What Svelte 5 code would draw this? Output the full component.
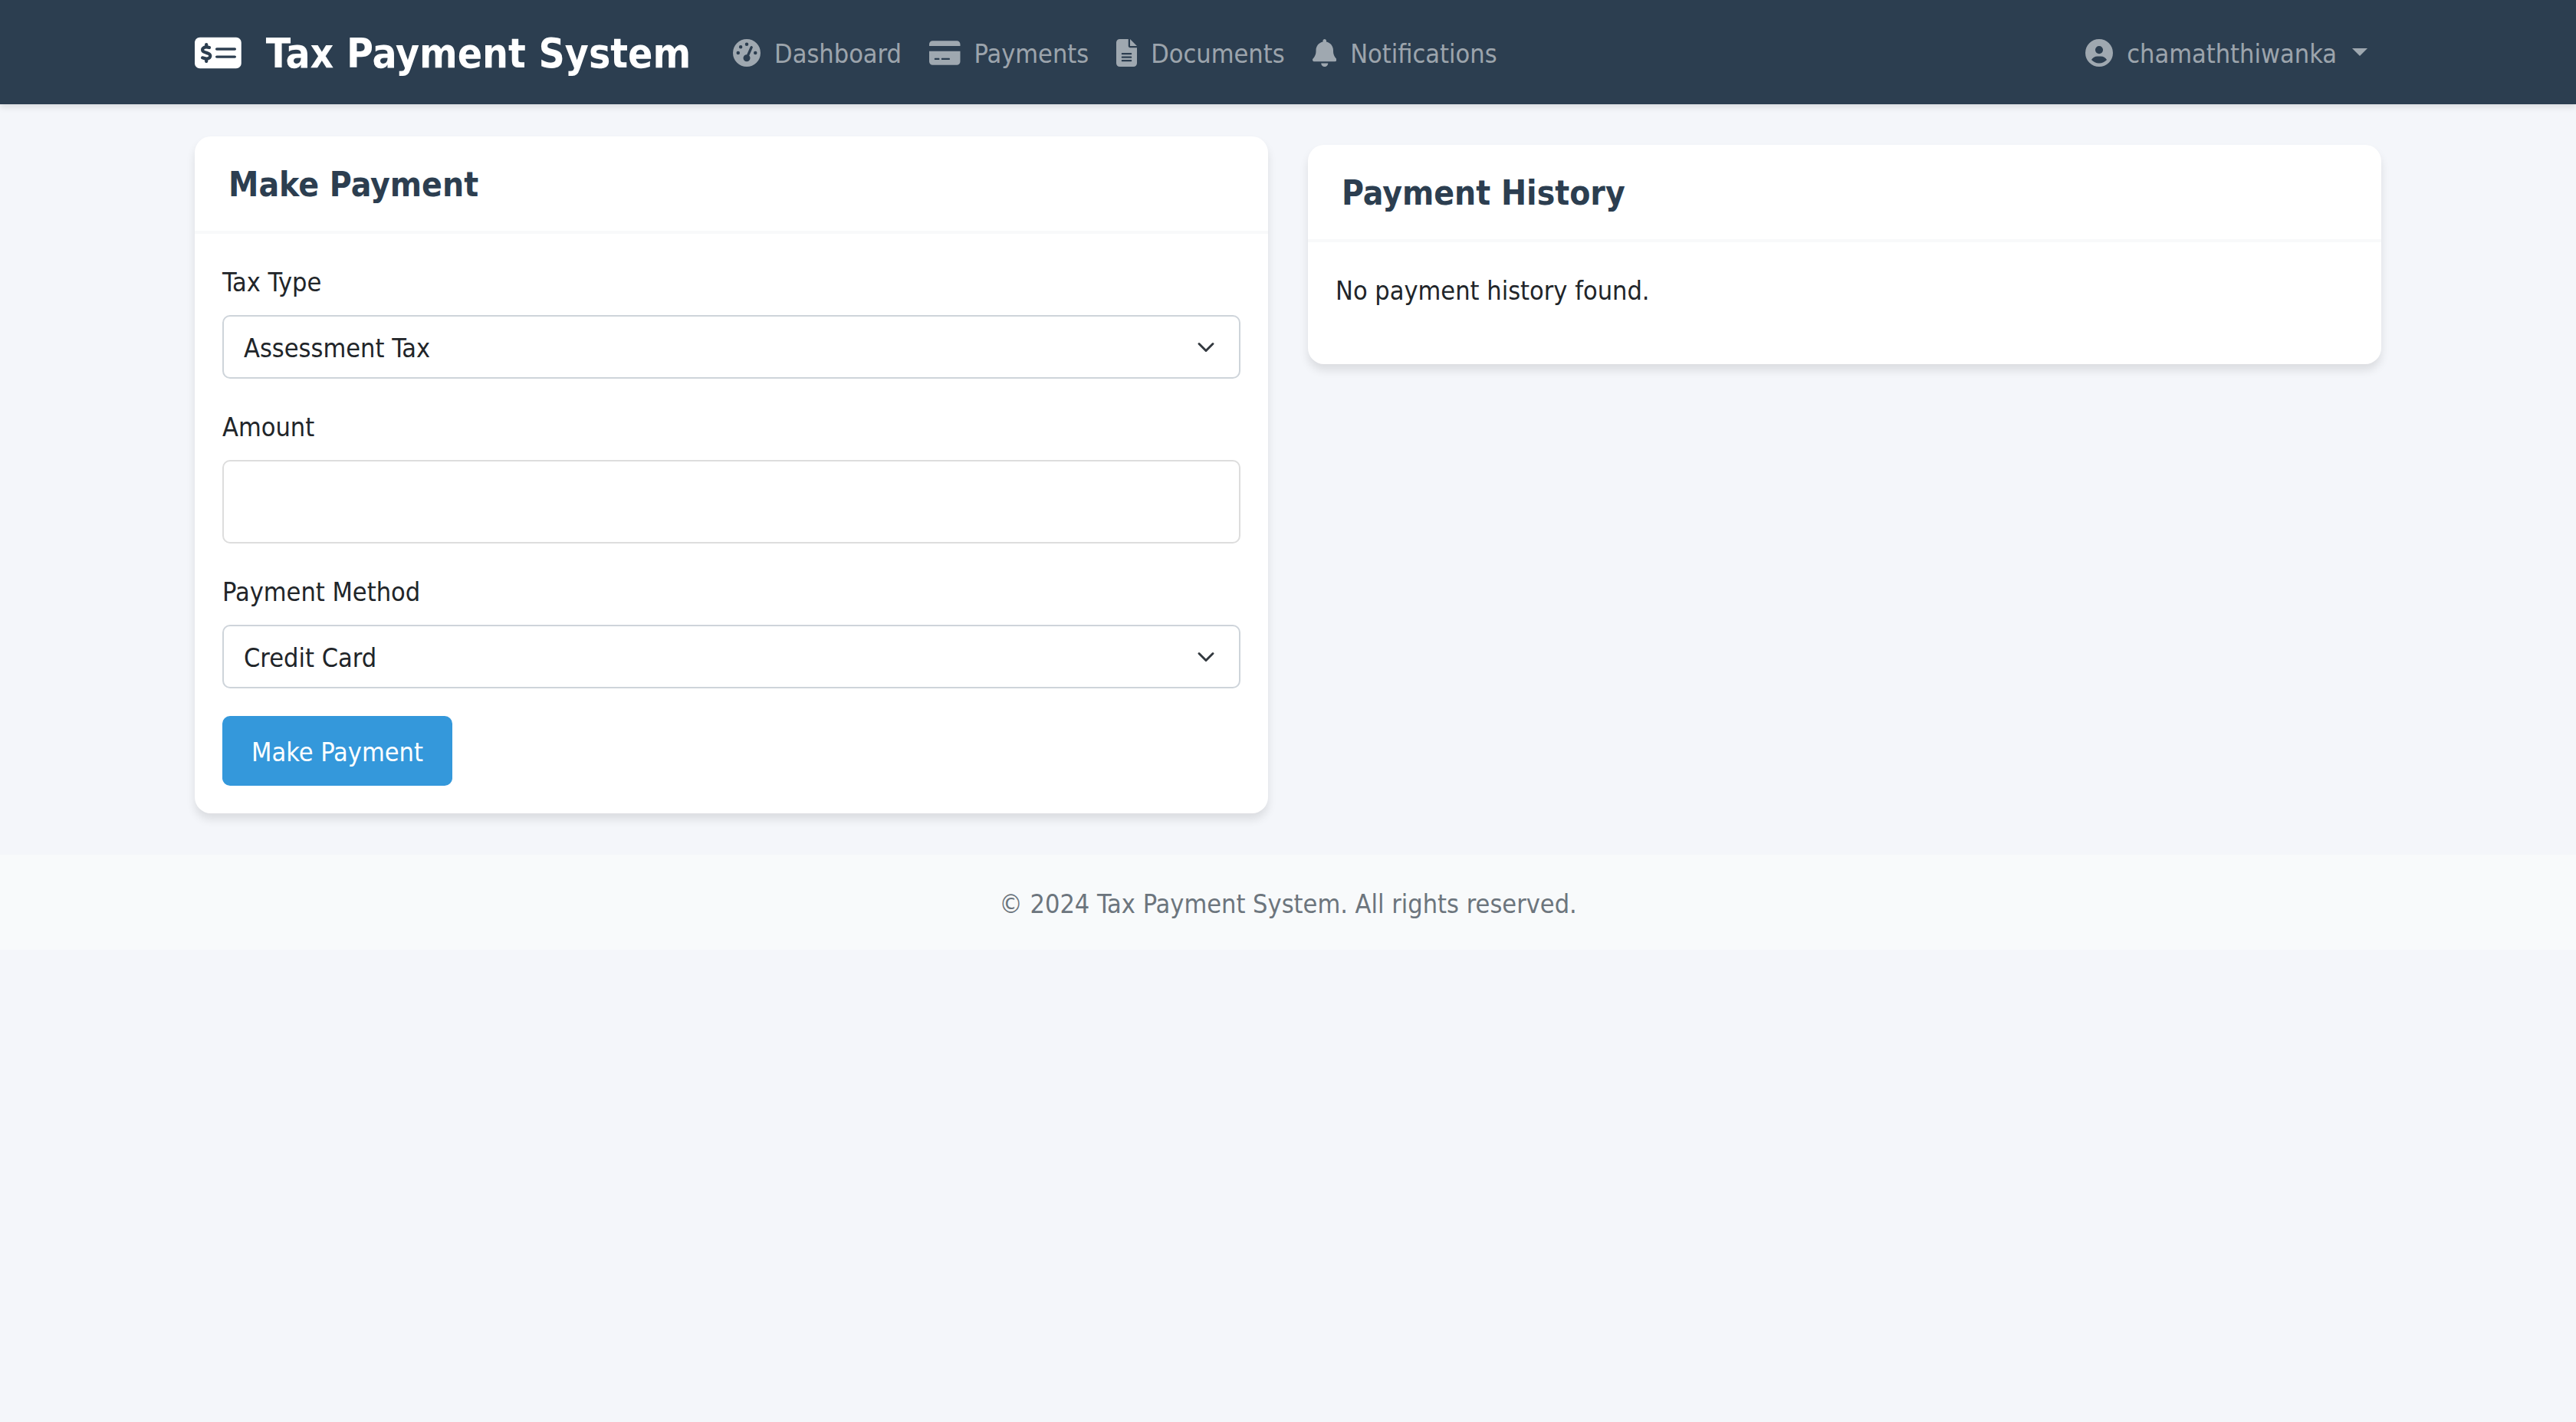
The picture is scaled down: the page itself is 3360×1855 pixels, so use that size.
<script>
  const navItems = [
    {
      label: 'Dashboard',
      href: '#dashboard',
      width: 512,
      path: 'M0 256a256 256 0 1 1 512 0A256 256 0 1 1 0 256zM288 96a32 32 0 1 0 -64 0 32 32 0 1 0 64 0zM256 416c35.3 0 64-28.7 64-64c0-17.4-6.9-33.1-18.1-44.6L366 161.7c5.3-12.1-.2-26.3-12.3-31.6s-26.3 .2-31.6 12.3L257.9 288c-.6 0-1.3 0-1.9 0c-35.3 0-64 28.7-64 64s28.7 64 64 64zM176 144a32 32 0 1 0 -64 0 32 32 0 1 0 64 0zM96 288a32 32 0 1 0 0-64 32 32 0 1 0 0 64zm352-32a32 32 0 1 0 -64 0 32 32 0 1 0 64 0z'
    },
    {
      label: 'Payments',
      href: '#payments',
      width: 576,
      path: 'M64 32C28.7 32 0 60.7 0 96v32H576V96c0-35.3-28.7-64-64-64H64zM576 224H0V416c0 35.3 28.7 64 64 64H512c35.3 0 64-28.7 64-64V224zM112 352h64c8.8 0 16 7.2 16 16s-7.2 16-16 16H112c-8.8 0-16-7.2-16-16s7.2-16 16-16zm112 16c0-8.8 7.2-16 16-16H368c8.8 0 16 7.2 16 16s-7.2 16-16 16H240c-8.8 0-16-7.2-16-16z'
    },
    {
      label: 'Documents',
      href: '#documents',
      width: 384,
      path: 'M64 0C28.7 0 0 28.7 0 64V448c0 35.3 28.7 64 64 64H320c35.3 0 64-28.7 64-64V160H256c-17.7 0-32-14.3-32-32V0H64zM256 0V128H384L256 0zM112 256H272c8.8 0 16 7.2 16 16s-7.2 16-16 16H112c-8.8 0-16-7.2-16-16s7.2-16 16-16zm0 64H272c8.8 0 16 7.2 16 16s-7.2 16-16 16H112c-8.8 0-16-7.2-16-16s7.2-16 16-16zm0 64H272c8.8 0 16 7.2 16 16s-7.2 16-16 16H112c-8.8 0-16-7.2-16-16s7.2-16 16-16z'
    },
    {
      label: 'Notifications',
      href: '#notifications',
      width: 448,
      path: 'M224 0c-17.7 0-32 14.3-32 32V51.2C119 66 64 130.6 64 208v18.8c0 47-17.3 92.4-48.5 127.6l-7.4 8.3c-8.4 9.4-10.4 22.9-5.3 34.4S19.4 416 32 416H416c12.6 0 24-7.4 29.2-18.9s3.1-25-5.3-34.4l-7.4-8.3C401.3 319.2 384 273.9 384 226.8V208c0-77.4-55-142-128-156.8V32c0-17.7-14.3-32-32-32zm45.3 493.3c12-12 18.7-28.3 18.7-45.3H224 160c0 17 6.7 33.3 18.7 45.3s28.3 18.7 45.3 18.7s33.3-6.7 45.3-18.7z'
    }
  ];

  let taxType = $state('Assessment Tax');
  let amount = $state('');
  let method = $state('Credit Card');
</script>

{#snippet chevron()}
  <svg class="chevron" viewBox="0 0 16 16" aria-hidden="true">
    <path d="m2 5 6 6 6-6" fill="none" stroke="#343a40" stroke-width="2" stroke-linecap="round" stroke-linejoin="round" />
  </svg>
{/snippet}

<header class="navbar">
  <div class="container bar">
    <a class="brand" href="#home">
      <svg class="brand-icon" viewBox="0 0 576 512" aria-hidden="true">
        <path d="M64 64C28.7 64 0 92.7 0 128V384c0 35.3 28.7 64 64 64H512c35.3 0 64-28.7 64-64V128c0-35.3-28.7-64-64-64H64zM272 192H496c8.8 0 16 7.2 16 16s-7.2 16-16 16H272c-8.8 0-16-7.2-16-16s7.2-16 16-16zM256 304c0-8.8 7.2-16 16-16H496c8.8 0 16 7.2 16 16s-7.2 16-16 16H272c-8.8 0-16-7.2-16-16zM164 152v13.9c7.5 1.2 14.6 2.9 21.1 4.7c10.7 2.8 17 13.8 14.2 24.5s-13.8 17-24.5 14.2c-11-2.9-21.6-5-31.2-5.2c-7.9-.1-16 1.8-21.5 5c-4.8 2.8-6.2 5.6-6.2 9.3c0 1.8 .1 3.5 5.3 6.7c6.3 3.8 15.5 6.7 28.3 10.5l.7 .2c11.2 3.4 25.6 7.7 37.1 15c12.9 8.1 24.3 21.3 24.6 41.6c.3 20.9-10.5 36.1-24.8 45c-7.2 4.5-15.2 7.3-23.2 9V360c0 11-9 20-20 20s-20-9-20-20V345.4c-10.3-2.2-20-5.5-28.2-8.4l0 0 0 0c-2.1-.7-4.1-1.4-6.1-2.1c-10.5-3.5-16.1-14.8-12.6-25.3s14.8-16.1 25.3-12.6c2.5 .8 4.9 1.7 7.2 2.4c13.6 4.6 24 8.1 35.1 8.5c8.6 .3 16.5-1.6 21.4-4.7c4.1-2.5 6-5.5 5.9-10.5c0-2.9-.8-5-5.9-8.2c-6.3-4-15.4-6.9-28-10.7l-1.7-.5c-10.9-3.3-24.6-7.4-35.6-14c-12.7-7.7-24.6-20.5-24.7-40.7c-.1-21.1 11.8-35.7 25.8-43.9c6.9-4.1 14.5-6.8 22.2-8.5V152c0-11 9-20 20-20s20 9 20 20z" />
      </svg>
      <span>Tax Payment System</span>
    </a>
    <nav class="links" aria-label="Main">
      {#each navItems as item}
        <a class="nav-link" href={item.href}>
          <svg class="icon" viewBox="0 0 {item.width} 512" aria-hidden="true"><path d={item.path} /></svg>
          <span>{item.label}</span>
        </a>
      {/each}
    </nav>
    <button class="nav-link user" type="button" aria-haspopup="true">
      <svg class="icon" viewBox="0 0 512 512" aria-hidden="true">
        <path d="M399 384.2C376.9 345.8 335.4 320 288 320H224c-47.4 0-88.9 25.8-111 64.2c35.2 39.2 86.2 63.8 143 63.8s107.8-24.7 143-63.8zM0 256a256 256 0 1 1 512 0A256 256 0 1 1 0 256zm256 16a72 72 0 1 0 0-144 72 72 0 1 0 0 144z" fill-rule="evenodd" />
      </svg>
      <span>chamaththiwanka</span>
      <i class="caret"></i>
    </button>
  </div>
</header>

<main class="container content">
  <section class="card">
    <h2>Make Payment</h2>
    <form class="body" onsubmit={(e) => e.preventDefault()}>
      <div class="field">
        <label for="tax-type">Tax Type</label>
        <div class="select">
          <select id="tax-type" bind:value={taxType}>
            <option>Assessment Tax</option>
          </select>
          {@render chevron()}
        </div>
      </div>
      <div class="field">
        <label for="amount">Amount</label>
        <input id="amount" type="text" inputmode="decimal" bind:value={amount} />
      </div>
      <div class="field">
        <label for="method">Payment Method</label>
        <div class="select">
          <select id="method" bind:value={method}>
            <option>Credit Card</option>
          </select>
          {@render chevron()}
        </div>
      </div>
      <button class="submit" type="submit">Make Payment</button>
    </form>
  </section>

  <section class="card history">
    <h2>Payment History</h2>
    <div class="body">
      <p>No payment history found.</p>
    </div>
  </section>
</main>

<footer>© 2024 Tax Payment System. All rights reserved.</footer>

<style>
  :global(body) {
    background: #f4f6fa;
    color: #212529;
    font: 34px/54px 'DejaVu Sans Condensed', 'DejaVu Sans', sans-serif;
  }

  * {
    box-sizing: border-box;
  }

  .container {
    width: 100%;
    max-width: 2900px;
    margin: 0 auto;
    padding-inline: 24px;
  }

  .navbar {
    background: #2c3e50;
    box-shadow: 0 4px 8px rgba(0, 0, 0, 0.1);
  }

  .bar {
    display: flex;
    align-items: center;
    min-height: 136px;
    padding-top: 4px;
  }

  .brand,
  .nav-link {
    display: flex;
    align-items: center;
    text-decoration: none;
    white-space: nowrap;
  }

  .brand {
    gap: 32px;
    margin-right: 55px;
    color: #fff;
    font-size: 53px;
    font-weight: 700;
  }

  .brand-icon {
    height: 54px;
    margin-bottom: 2px;
    fill: currentColor;
  }

  .links {
    display: flex;
    gap: 36px;
  }

  .nav-link {
    gap: 18px;
    color: rgba(255, 255, 255, 0.55);
  }

  .icon {
    height: 36px;
    margin-bottom: 2px;
    fill: currentColor;
  }

  .user {
    margin-left: auto;
    padding: 0 18px 0 0;
    border: 0;
    background: none;
    font: inherit;
    cursor: pointer;
  }

  .caret {
    margin: 0 0 4px 2px;
    border: 10px solid transparent;
    border-top-color: currentColor;
    border-bottom: 0;
  }

  .content {
    display: grid;
    grid-template-columns: 1fr 1fr;
    align-items: start;
    gap: 52px;
    padding-block: 42px 54px;
  }

  .card {
    border-radius: 21px;
    background: #fff;
    box-shadow: 0 8px 12px rgba(0, 0, 0, 0.1);
  }

  .history {
    margin-top: 11px;
  }

  h2 {
    margin: 0;
    padding: 36px 44px 33px;
    border-bottom: 4px solid #f8f9fa;
    color: #2c3e50;
    font-size: 44px;
    font-weight: 700;
    line-height: 54px;
  }

  .body {
    padding: 36px;
  }

  .field {
    display: flex;
    flex-direction: column;
    gap: 16px;
    margin-bottom: 36px;
  }

  .select {
    display: grid;
  }

  .select > :global(*) {
    grid-area: 1 / 1;
  }

  select,
  input {
    width: 100%;
    border: 2px solid #ced4da;
    border-radius: 10px;
    background: #fff;
    color: inherit;
    font: inherit;
  }

  select {
    height: 83px;
    padding: 3px 81px 0 26px;
    appearance: none;
  }

  input {
    height: 109px;
    padding: 0 26px;
    border-color: #ddd;
  }

  .chevron {
    width: 24px;
    height: 24px;
    align-self: center;
    justify-self: end;
    margin-right: 33px;
    pointer-events: none;
  }

  .submit {
    display: block;
    height: 91px;
    padding: 2px 38px 0;
    border: 0;
    border-radius: 10px;
    background: #3498db;
    color: #fff;
    font: inherit;
    cursor: pointer;
  }

  p {
    margin: 0 0 33px;
  }

  footer {
    padding: 37px 24px 33px;
    background: #f8fafb;
    color: #6c757d;
    text-align: center;
  }
</style>
